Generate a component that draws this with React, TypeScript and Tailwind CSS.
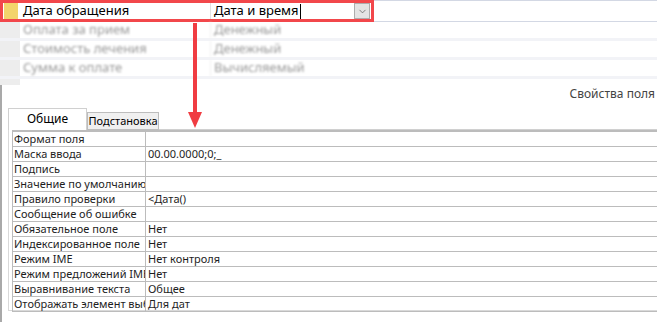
import { ChevronDown } from "lucide-react";

const blurredRows = [
  { name: "Оплата за прием", type: "Денежный" },
  { name: "Стоимость лечения", type: "Денежный" },
  { name: "Сумма к оплате", type: "Вычисляемый" },
];

const props: [string, string][] = [
  ["Формат поля", ""],
  ["Маска ввода", "00.00.0000;0;_"],
  ["Подпись", ""],
  ["Значение по умолчанию", ""],
  ["Правило проверки", "<Дата()"],
  ["Сообщение об ошибке", ""],
  ["Обязательное поле", "Нет"],
  ["Индексированное поле", "Нет"],
  ["Режим IME", "Нет контроля"],
  ["Режим предложений IME", "Нет"],
  ["Выравнивание текста", "Общее"],
  ["Отображать элемент выбора даты", "Для дат"],
];

function SelectedRow() {
  return (
    <div className="flex h-[22px]">
      <div className="flex w-[374px] items-center border-[3px] border-[#f2474b]">
        <div className="ml-px h-[16px] w-[14px] bg-[#f3d46c]" />
        <div className="ml-[2px] flex h-[16px] w-[191px] items-center border-r border-[#e2e2e2] bg-white pl-[3px] text-[13px] text-black">
          Дата обращения
        </div>
        <div className="flex h-[16px] flex-1 items-center bg-white pl-[3px] text-[13px] text-black">
          Дата и время
          <span className="ml-px h-[15px] w-px bg-black" />
        </div>
        <div className="mr-px flex h-[16px] w-[16px] items-center justify-center border border-[#adadad] bg-[#e4e4e4]">
          <ChevronDown size={11} strokeWidth={1.5} className="text-[#555]" />
        </div>
      </div>
      <div className="flex-1 border-y border-[#d3d8e4]" />
    </div>
  );
}

function BlurRow({ name, type }: { name: string; type: string }) {
  return (
    <div className="flex h-[19px] border-b-[3px] border-[#f2f3f7]">
      <div className="w-[20px] bg-[#ededed]" />
      <div className="flex w-[191px] items-center border-r border-[#f0f0f0] pl-[3px] text-[13px] text-[#9a9a9a] blur-[1.2px]">
        {name}
      </div>
      <div className="flex flex-1 items-center pl-[3px] text-[13px] text-[#9a9a9a] blur-[1.2px]">{type}</div>
    </div>
  );
}

function Arrow() {
  return (
    <svg className="pointer-events-none absolute left-[186px] top-[22px]" width="18" height="108" viewBox="0 0 18 108">
      <rect x="7" y="1" width="4" height="92" fill="#f03c42" />
      <polygon points="2,90 16,90 9,106" fill="#f03c42" />
    </svg>
  );
}

export default function App() {
  return (
    <div className="relative h-[322px] w-[657px] overflow-hidden bg-white font-['Noto_Sans',sans-serif] text-[#1e1e1e]">
      <SelectedRow />
      {blurredRows.map((r) => (
        <BlurRow key={r.name} name={r.name} type={r.type} />
      ))}
      <div className="h-[6px] w-[20px] bg-[#ededed]" />

      <div className="h-[237px] border-l-2 border-[#a9a9a9] pl-[6px]">
        <div className="flex h-[21px] items-start justify-end pr-[2px] pt-px text-[12px] leading-[16px] text-[#444]">Свойства поля</div>

        <div className="flex h-[24px] items-end">
          <div className="flex h-[22px] w-[79px] items-center justify-center border-x border-t border-[#d0d0d0] bg-white pb-[2px] text-[12px] text-black">
            Общие
          </div>
          <div className="flex h-[18px] w-[72px] items-center justify-center border border-[#bdbdbd] bg-[#f0f0f0] text-[11px] text-black">
            Подстановка
          </div>
          <div className="h-px flex-1 self-end bg-[#d0d0d0]" />
        </div>

        <div className="h-[181px] border-b border-l border-[#d9d9d9] pl-[3px]">
          <div className="border-l border-t-2 border-[#bcbcbc]">
            {props.map(([label, value]) => (
              <div key={label} className="flex h-[15px] border-b border-[#bcbcbc] text-[11px] leading-[14px]">
                <div className="w-[133px] overflow-hidden whitespace-nowrap border-r border-[#bcbcbc] pl-px">{label}</div>
                <div className="flex-1 overflow-hidden whitespace-nowrap pl-[2px]">{value}</div>
              </div>
            ))}
          </div>
        </div>
      </div>

      <Arrow />
    </div>
  );
}
